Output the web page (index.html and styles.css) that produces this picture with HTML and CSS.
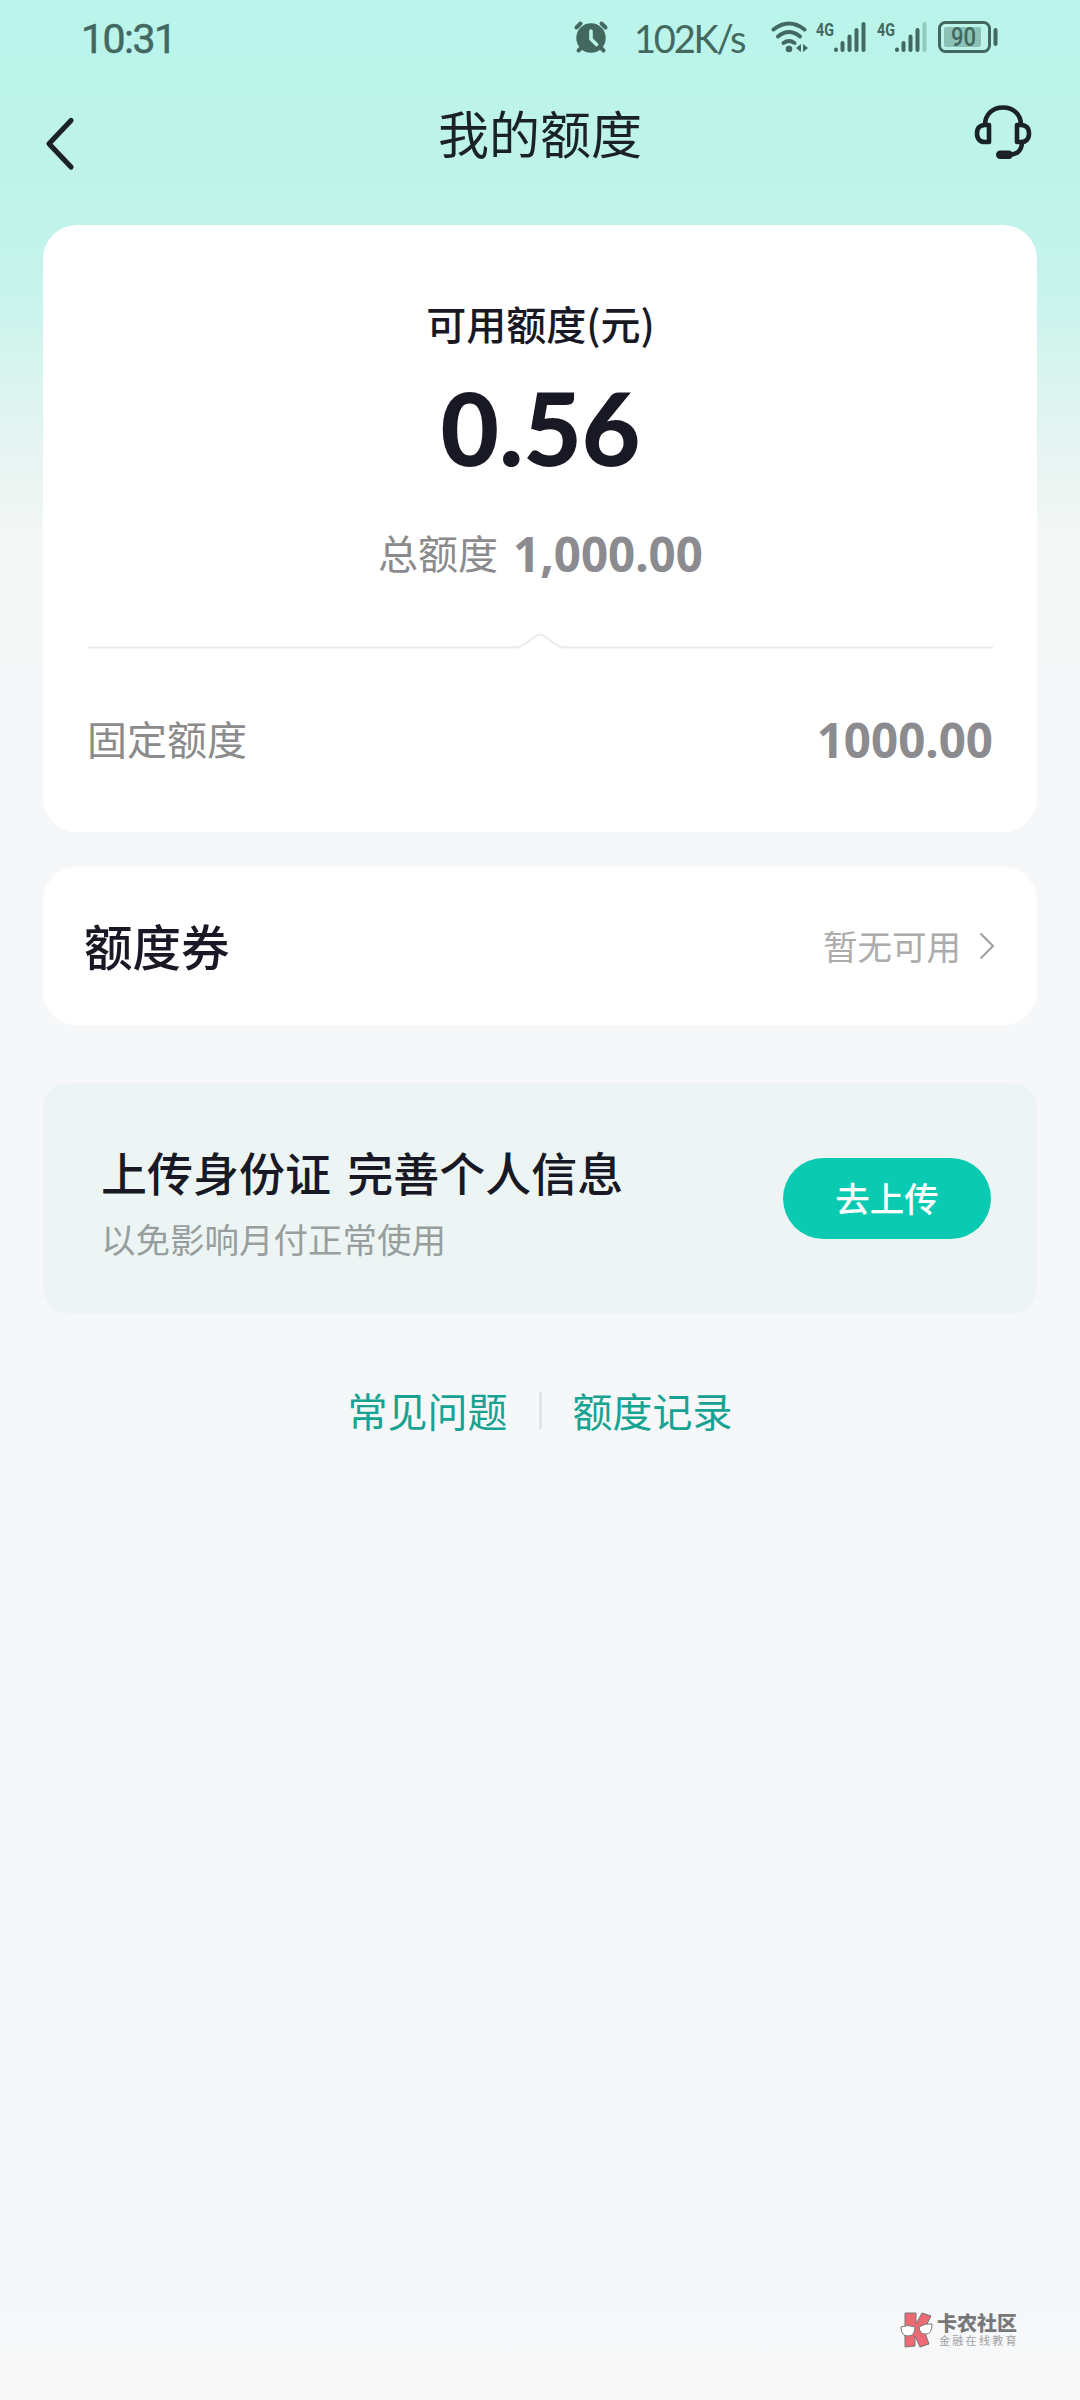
FILE: index.html
```html
<!DOCTYPE html>
<html lang="zh-CN">
<head>
<meta charset="utf-8">
<title>我的额度</title>
<link rel="stylesheet" href="styles.css">
</head>
<body>
<div class="status">
  <span class="time">10:31</span>
  <div class="status-right">
    <svg class="alarm" width="34" height="32" viewBox="0 0 34 32">
      <circle cx="17" cy="17" r="14.7" fill="currentColor"/>
      <path d="M2.500 6.500l4-4M31.500 6.500l-4-4M4.500 29.500l3-3M29.500 29.500l-3-3" stroke="currentColor" stroke-width="4" stroke-linecap="round"/>
      <path d="M17 10v8l5.500 5.500" fill="none" stroke="#bbf4e9" stroke-width="3.600" stroke-linecap="round"/>
    </svg>
    <span class="speed">102K/s</span>
    <svg class="wifi" width="38" height="32" viewBox="0 0 38 32">
      <g fill="none" stroke="currentColor" stroke-width="4" stroke-linecap="round">
        <path d="M2.500 8.500Q18 -3.500 33.500 8.500"/>
        <path d="M7 15.500Q18 6.500 29 15.500"/>
        <path d="M12.500 22Q18 18 23.500 22"/>
      </g>
      <circle cx="18" cy="28" r="3.300" fill="currentColor"/>
      <path d="M30 23v8l-5-4zM32 23l5 4-5 4z" fill="currentColor"/>
    </svg>
    <svg class="signal" width="52" height="32" viewBox="0 0 52 32">
      <text class="net" x="0" y="14.500" textLength="18" lengthAdjust="spacingAndGlyphs">4G</text>
      <path d="M20 28.500v.500M26.500 22v7M33.500 15.500v13.500M40.500 9v20M47.500 3v26" stroke="currentColor" stroke-width="4" stroke-linecap="round"/>
    </svg>
    <svg class="signal" width="52" height="32" viewBox="0 0 52 32">
      <text class="net" x="0" y="14.500" textLength="18" lengthAdjust="spacingAndGlyphs">4G</text>
      <path d="M20 28.500v.500M26.500 22v7M33.500 15.500v13.500M40.500 9v20" stroke="currentColor" stroke-width="4" stroke-linecap="round"/>
      <path d="M47.500 3v26" stroke="#93c9be" stroke-width="4" stroke-linecap="round"/>
    </svg>
    <svg class="battery" width="60" height="32" viewBox="0 0 60 32">
      <rect x="1.500" y="1.500" width="50" height="29" rx="6" fill="none" stroke="currentColor" stroke-width="3"/>
      <rect x="6" y="6" width="37" height="20" rx="2" fill="#8cc2b6"/>
      <path d="M57.500 9v14" stroke="currentColor" stroke-width="4" stroke-linecap="round"/>
      <text class="level" x="13" y="24.500" textLength="25" lengthAdjust="spacingAndGlyphs">90</text>
    </svg>
  </div>
</div>

<header class="nav">
  <svg class="back" width="30" height="54" viewBox="0 0 30 54"><path d="M26 3.500L4 26.700 26 50" fill="none" stroke="currentColor" stroke-width="5.200" stroke-linecap="round" stroke-linejoin="round"/></svg>
  <h1>我的额度</h1>
  <svg class="service" width="58" height="56" viewBox="0 0 58 56">
    <g fill="none" stroke="currentColor" stroke-width="4.600" stroke-linejoin="round">
      <path d="M11 20C11 9 19 2.500 29 2.500S47 9 47 20"/>
      <path d="M15 20v17h-4c-5 0-8-3-8-8.500S6 20 11 20zM43 20v17h4c5 0 8-3 8-8.500S52 20 47 20z"/>
      <path d="M48 37c0 8-5 12.500-12 12.500"/>
    </g>
    <rect x="22" y="45.500" width="17" height="8.500" rx="4.200" fill="currentColor"/>
  </svg>
</header>

<main class="content">
  <section class="card quota">
    <h2>可用额度(元)</h2>
    <div class="amount">0.56</div>
    <div class="total"><span>总额度</span><b>1,000.00</b></div>
    <svg class="divider" width="905" height="18" viewBox="0 0 905 18"><path d="M0 15.500H427Q432 15.500 436 12.500L448 4Q452 1 456 4L468 12.500Q472 15.500 477 15.500H905" fill="none" stroke="#ebebeb" stroke-width="2"/></svg>
    <div class="fixed-row"><span>固定额度</span><b>1000.00</b></div>
  </section>

  <section class="card coupon">
    <h3>额度券</h3>
    <div class="more"><span>暂无可用</span>
      <svg width="16" height="28" viewBox="0 0 16 28"><path d="M1.500 1.500L14 14 1.500 26.500" fill="none" stroke="#a3a3a3" stroke-width="2.200"/></svg>
    </div>
  </section>

  <section class="upload">
    <div>
      <h4>上传身份证 完善个人信息</h4>
      <p>以免影响月付正常使用</p>
    </div>
    <button class="upload-btn">去上传</button>
  </section>

  <nav class="links">
    <a>常见问题</a><i></i><a>额度记录</a>
  </nav>
</main>

<footer class="brand">
  <svg width="34" height="36" viewBox="0 0 34 36">
    <path d="M5 1h11v11l6-11 9 3-7 14 5 14-9 3-5-11v10L5 35z" fill="#ed6a74" stroke="#777" stroke-width="1"/>
    <path d="M1 15q7-3 14 0 0 9-7 9T1 15zM19 15q6-4 13-3 0 10-6 10-6 1-7-7z" fill="#fff" stroke="#777" stroke-width="1"/>
  </svg>
  <div class="brand-text"><strong>卡农社区</strong><small>金融在线教育</small></div>
</footer>
</body>
</html>
```
FILE: styles.css
```css
* { box-sizing: border-box; margin: 0; padding: 0; }
body {
  width: 1080px;
  height: 2400px;
  display: flex;
  flex-direction: column;
  font-family: "Noto Sans CJK SC", sans-serif;
  color: #181925;
  background: linear-gradient(180deg, #b9f4ea 0, #c1f3ea 225px, #c9f4ec 300px, #d8f4ef 370px, #e6f4f1 450px, #f5f7f7 550px, #f5f7f9 780px, #f5f7f9 2300px, #f8f8f8 2400px);
}
h1, h2, h3, h4 { font-weight: 500; }
svg { display: block; flex: none; overflow: visible; }

.status {
  height: 74px;
  padding: 0 82px 0 81px;
  display: flex;
  align-items: center;
  justify-content: space-between;
  color: #42685f;
}
.time { font: 400 41px/74px Roboto, sans-serif; letter-spacing: -1.500px; padding-top: 3px; -webkit-text-stroke: .5px; }
.status-right { display: flex; align-items: center; }
.speed { width: 111px; margin: 2px 26px 0 26px; font: 400 38px/60px Lato, sans-serif; letter-spacing: -2.200px; white-space: nowrap; }
.wifi { margin-right: 7px; }
.signal { margin-right: 9px; }
.net { font: 700 18px Roboto, sans-serif; fill: currentColor; }
.level { font: 500 25px Roboto, sans-serif; fill: currentColor; }

.nav {
  height: 151px;
  padding: 0 48px 0 45px;
  display: grid;
  grid-template-columns: 58px 1fr 58px;
  align-items: start;
  color: #1b2225;
}
.back { margin-top: 43px; }
.nav h1 { font-size: 51px; line-height: 76px; font-weight: 400; margin-top: 20px; padding-left: 3px; text-align: center; }
.service { margin-top: 31px; }

.content { padding: 0 43px; flex: 1; display: flex; flex-direction: column; }
.card { background: #fff; border-radius: 34px; }
.quota {
  height: 607px;
  padding: 68px 44px 0 45px;
  display: flex;
  flex-direction: column;
  align-items: center;
}
.quota h2 { font-size: 40px; line-height: 60px; }
.amount { font: 900 101px/120px Lato, sans-serif; margin-top: 14px; }
.total { display: flex; align-items: center; gap: 15px; margin-top: 35px; height: 60px; color: #8b8b8d; font-size: 40px; }
.quota b { font: 700 47.500px/60px "Noto Sans", sans-serif; color: #8b8b90; padding-top: 4px; }
.divider { margin-top: 50px; }
.fixed-row { width: 100%; margin-top: 58px; display: flex; align-items: center; justify-content: space-between; height: 60px; font-size: 40px; color: #8b8b8b; }
.fixed-row span { margin-left: -1px; }

.coupon { height: 158px; margin-top: 35px; padding: 0 42px 0 41px; display: flex; align-items: center; justify-content: space-between; }
.coupon h3 { font-size: 48.500px; line-height: 72px; padding-bottom: 3px; }
.more { display: flex; align-items: center; gap: 18px; font-size: 34.500px; color: #acacac; }
.more span { padding-bottom: 2px; }

.upload { height: 230px; margin-top: 58px; padding: 0 46px 0 58px; border-radius: 24px; background: #ecf5f4; display: flex; align-items: center; justify-content: space-between; }
.upload h4 { font-size: 46px; line-height: 68px; margin-top: 5px; word-spacing: 6px; }
.upload p { font-size: 34.500px; line-height: 52px; margin-top: 7px; color: #989e9d; }
.upload-btn { width: 208px; height: 81px; border: 0; border-radius: 41px; padding-bottom: 3px; background: #0acbb2; color: #fff; font: 500 34.500px/52px "Noto Sans CJK SC", sans-serif; }

.links { margin-top: 67px; height: 60px; display: flex; align-items: center; justify-content: center; gap: 31px; font-size: 40px; line-height: 60px; color: #17a391; }
.links i { width: 3px; height: 37px; background: #e2e4e6; }

.brand { height: 90px; padding: 2px 62px 0 0; display: flex; justify-content: flex-end; gap: 3px; }
.brand-text { display: flex; flex-direction: column; width: 81px; }
.brand strong { font-size: 20px; line-height: 22px; font-weight: 900; color: #77787b; white-space: nowrap; }
.brand small { font-size: 11px; line-height: 13px; letter-spacing: 2.300px; margin-left: 2px; color: #a0a1a3; white-space: nowrap; }
```
